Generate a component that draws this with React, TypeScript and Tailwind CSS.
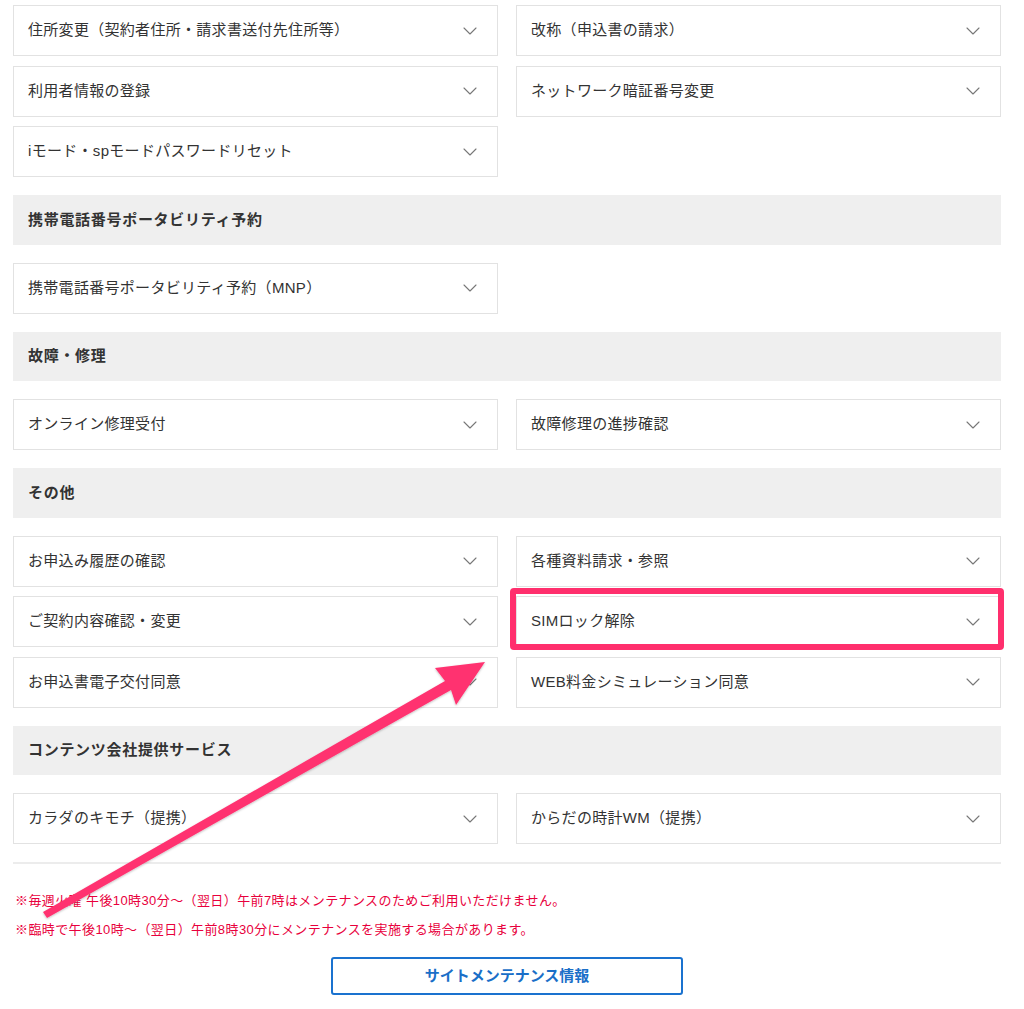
import { ChevronDown } from "lucide-react";

type Section = {
  title?: string;
  items: string[];
};

const sections: Section[] = [
  {
    items: [
      "住所変更（契約者住所・請求書送付先住所等）",
      "改称（申込書の請求）",
      "利用者情報の登録",
      "ネットワーク暗証番号変更",
      "iモード・spモードパスワードリセット",
    ],
  },
  {
    title: "携帯電話番号ポータビリティ予約",
    items: ["携帯電話番号ポータビリティ予約（MNP）"],
  },
  {
    title: "故障・修理",
    items: ["オンライン修理受付", "故障修理の進捗確認"],
  },
  {
    title: "その他",
    items: [
      "お申込み履歴の確認",
      "各種資料請求・参照",
      "ご契約内容確認・変更",
      "SIMロック解除",
      "お申込書電子交付同意",
      "WEB料金シミュレーション同意",
    ],
  },
  {
    title: "コンテンツ会社提供サービス",
    items: ["カラダのキモチ（提携）", "からだの時計WM（提携）"],
  },
];

function Row({ label, marked }: { label: string; marked?: boolean }) {
  return (
    <div className="relative">
      <div className="flex h-[51px] items-center justify-between border border-[#e2e2e2] bg-white pl-[14px] pr-[15px]">
        <span className="text-[15px] tracking-[0.3px] text-[#333]">{label}</span>
        <ChevronDown className="h-6 w-6 text-[#777]" strokeWidth={1.1} />
      </div>
      {/* 注目枠 */}
      {marked && (
        <div className="pointer-events-none absolute -bottom-[3px] -left-[6px] -right-[3px] -top-[8px] rounded-[4px] border-[6px] border-[#ff2f6d]" />
      )}
    </div>
  );
}

export default function App() {
  return (
    <main
      className="relative min-h-[1009px] bg-white"
      style={{ fontFamily: '"Liberation Sans", "Noto Sans CJK JP", sans-serif' }}
    >
      <div className="w-[1001px] pl-[13px] pt-[5px]">
        {sections.map((section, i) => (
          <div key={i} className={i > 0 ? "mt-[18px]" : ""}>
            {section.title && (
              <div className="mb-[18px] flex h-[49.5px] items-center bg-[#efefef] px-[15px]">
                <h2 className="text-[15px] font-bold tracking-[0.7px] text-[#333]">
                  {section.title}
                </h2>
              </div>
            )}
            <div className="grid grid-cols-2 gap-x-[18px] gap-y-[9.5px]">
              {section.items.map((item) => (
                <Row key={item} label={item} marked={item === "SIMロック解除"} />
              ))}
            </div>
          </div>
        ))}

        <div className="mt-[18px] border-t-2 border-[#ececec]" />

        <div className="mt-[27px] space-y-[9px] pl-[2px] text-[13px] leading-[20px] tracking-[0.4px] text-[#e8003c]">
          <p>※毎週火曜 午後10時30分～（翌日）午前7時はメンテナンスのためご利用いただけません。</p>
          <p>※臨時で午後10時～（翌日）午前8時30分にメンテナンスを実施する場合があります。</p>
        </div>

        <div className="mt-[17px] flex justify-center">
          <button className="flex h-[38px] w-[352px] items-center justify-center rounded-[3px] border-2 border-[#1a72cf] text-[15px] font-bold text-[#1a6fc8]">
            サイトメンテナンス情報
          </button>
        </div>
      </div>

      {/* 矢印 */}
      <svg
        className="pointer-events-none absolute left-0 top-0"
        width="1024"
        height="1009"
        viewBox="0 0 1024 1009"
      >
        <defs>
          <filter id="sh" x="-10%" y="-10%" width="120%" height="120%">
            <feDropShadow dx="0" dy="1" stdDeviation="1.2" floodColor="#000" floodOpacity="0.25" />
          </filter>
        </defs>
        <polygon
          filter="url(#sh)"
          fill="#ff3370"
          points="485,662 435,668 445,681 43,912 47,918 451,690 456,705"
        />
      </svg>
    </main>
  );
}
